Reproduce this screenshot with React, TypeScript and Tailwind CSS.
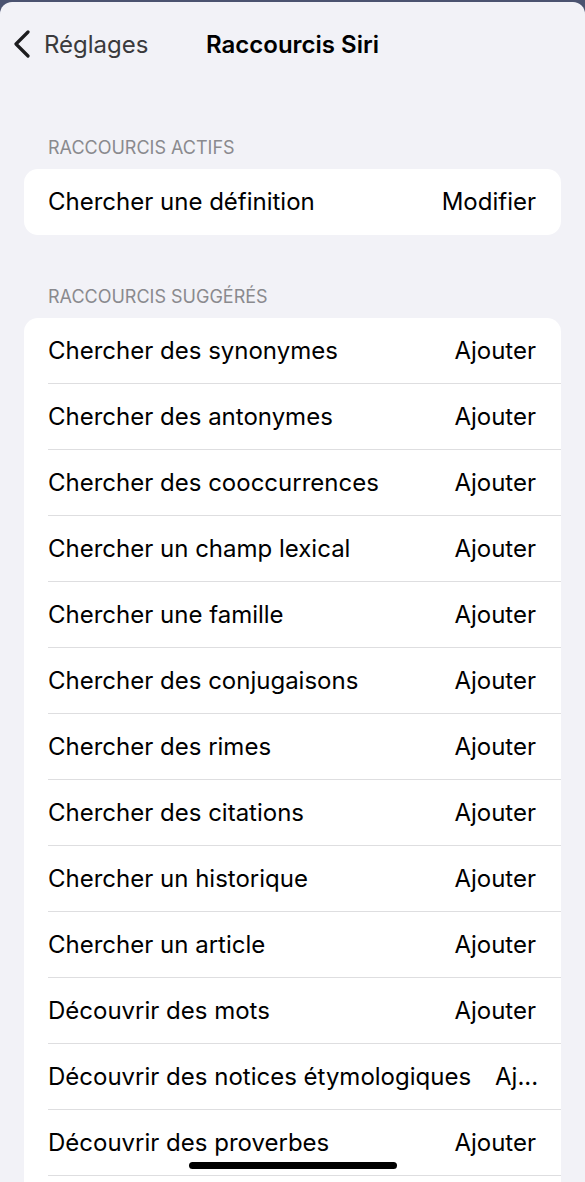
import React from "react";

const suggested: [string, string][] = [
  ["Chercher des synonymes", "Ajouter"],
  ["Chercher des antonymes", "Ajouter"],
  ["Chercher des cooccurrences", "Ajouter"],
  ["Chercher un champ lexical", "Ajouter"],
  ["Chercher une famille", "Ajouter"],
  ["Chercher des conjugaisons", "Ajouter"],
  ["Chercher des rimes", "Ajouter"],
  ["Chercher des citations", "Ajouter"],
  ["Chercher un historique", "Ajouter"],
  ["Chercher un article", "Ajouter"],
  ["Découvrir des mots", "Ajouter"],
  ["Découvrir des notices étymologiques", "Aj..."],
  ["Découvrir des proverbes", "Ajouter"],
];

function Row({ label, action }: { label: string; action: string }) {
  return (
    <div className="pl-6">
      <div className="flex h-[66px] items-center gap-6 border-b border-[#dedee0] pr-[25px]">
        <span className="shrink-0 text-[24px] text-black">{label}</span>
        <span className="ml-auto shrink-0 text-[24px] text-black">{action}</span>
      </div>
    </div>
  );
}

export default function App() {
  return (
    <div
      className="h-[1182px] w-[585px] overflow-hidden bg-[#4b5370]"
      style={{ fontFamily: "Inter, 'Noto Sans', sans-serif" }}
    >
      <div className="relative mt-[2px] h-[1180px] overflow-hidden rounded-t-[12px] bg-[#f2f2f7]">
        {/* Nav bar */}
        <div className="relative flex h-[86px] items-center">
          <div className="flex items-center pl-[13px]">
            <svg width="18" height="28" viewBox="0 0 18 28" className="-mt-[2px]">
              <path d="M15 2 L3 14 L15 26" fill="none" stroke="#1c1c1e" strokeWidth="3.2" strokeLinecap="round" strokeLinejoin="round" />
            </svg>
            <span className="ml-[13px] text-[24px] text-[#3a3a3c]">Réglages</span>
          </div>
          <div className="absolute left-0 right-0 text-center text-[24px] font-semibold text-black">
            Raccourcis Siri
          </div>
        </div>

        <div className="px-6">
          <div className="pl-6 pt-[46px] pb-[8px] text-[18px] uppercase text-[#8a8a8e]">Raccourcis actifs</div>
          <div className="overflow-hidden rounded-[14px] bg-white">
            <div className="flex h-[66px] items-center pl-6 pr-[25px]">
              <span className="text-[24px] text-black">Chercher une définition</span>
              <span className="ml-auto text-[24px] text-black">Modifier</span>
            </div>
          </div>

          <div className="pl-6 pt-[48px] pb-[8px] text-[18px] uppercase text-[#8a8a8e]">Raccourcis suggérés</div>
          <div className="overflow-hidden rounded-[14px] bg-white">
            {suggested.map(([s, a]) => (
              <Row key={s} label={s} action={a} />
            ))}
            <div className="h-[66px]" />
          </div>
        </div>

        {/* Home indicator */}
        <div className="absolute bottom-[13px] left-[189px] h-[7px] w-[208px] rounded-full bg-black" />
      </div>
    </div>
  );
}
